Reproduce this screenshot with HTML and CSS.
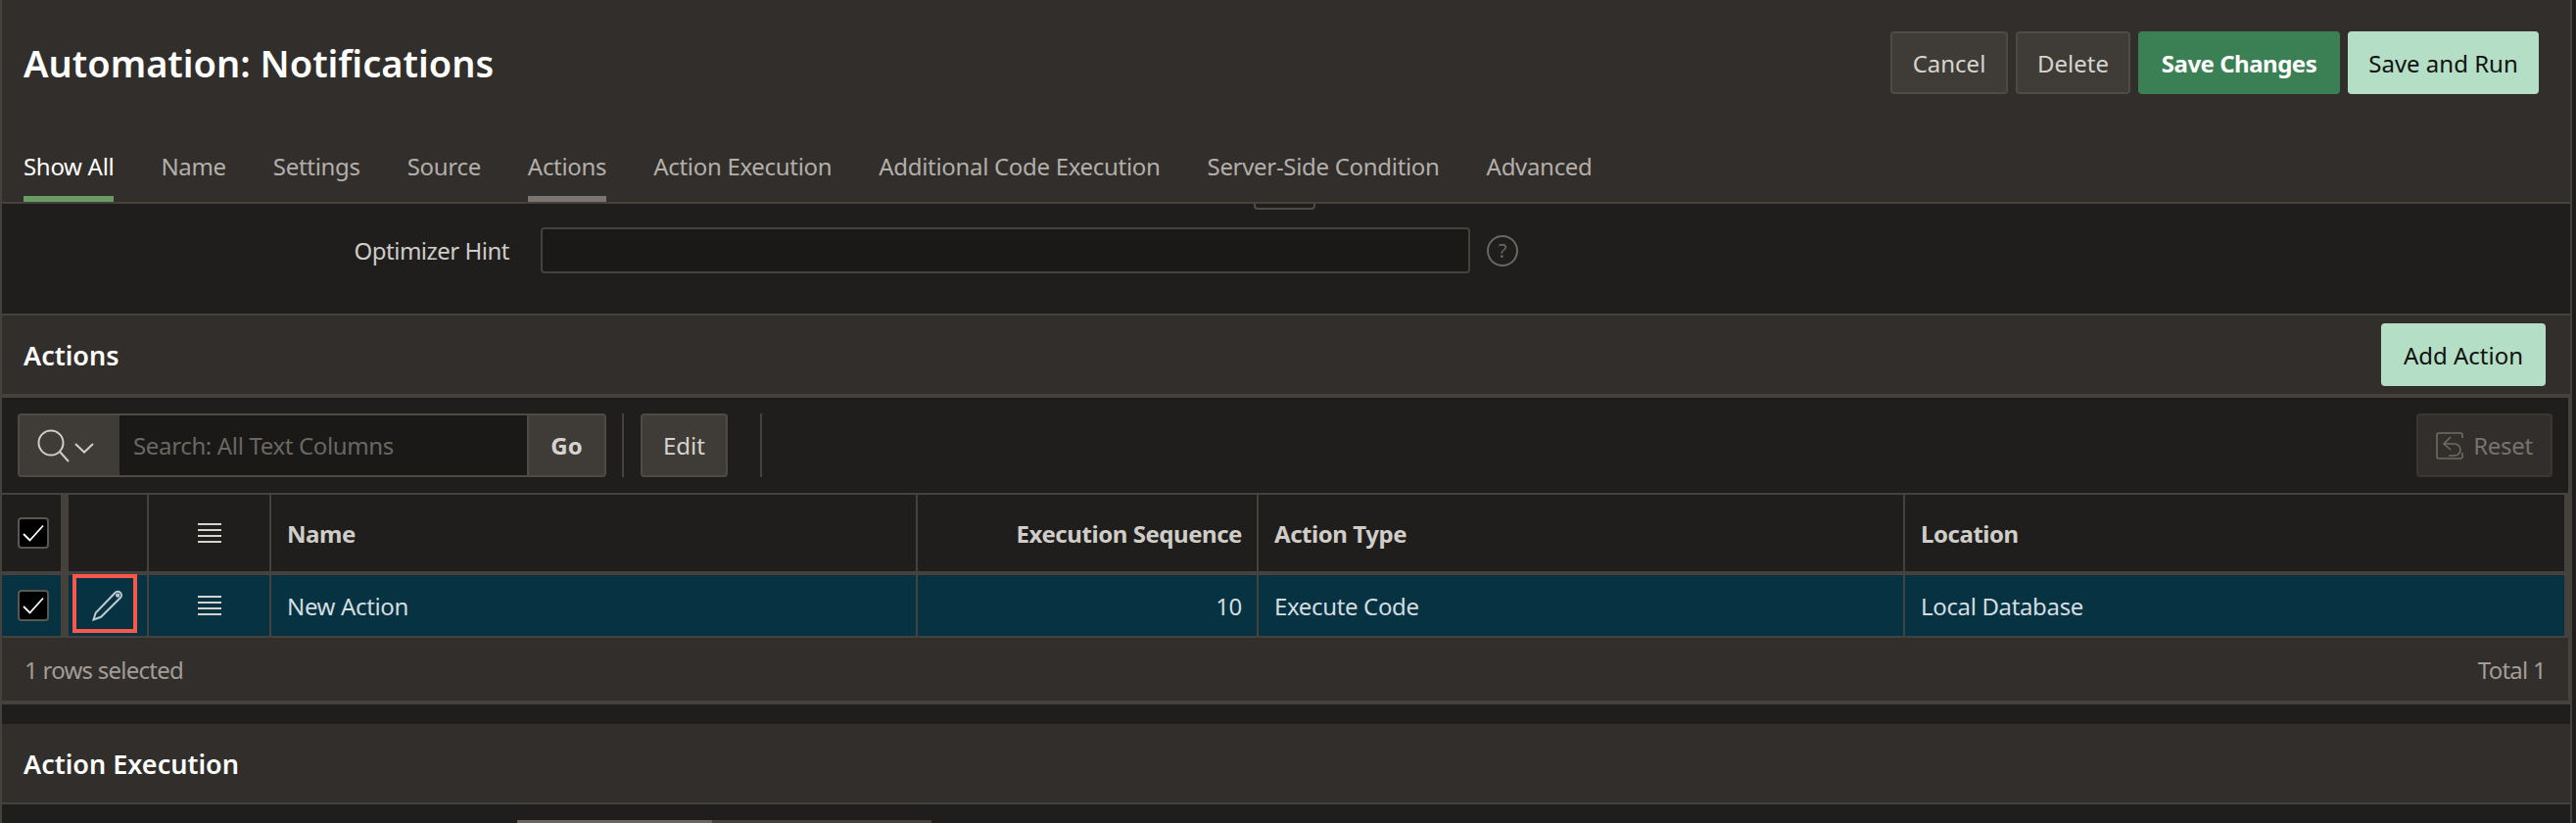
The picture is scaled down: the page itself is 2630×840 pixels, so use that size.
FILE: index.html
```html
<!DOCTYPE html>
<html lang="en">

<head>
    <meta charset="UTF-8">
    <title>Automation: Notifications</title>
    <link rel="stylesheet" href="styles.css">
</head>

<body>
    <div class="page">
        <header class="page-head">
            <div class="title-row">
                <h1>Automation: Notifications</h1>
                <div class="head-buttons">
                    <button class="btn btn-cancel">Cancel</button>
                    <button class="btn btn-delete">Delete</button>
                    <button class="btn btn-hot">Save Changes</button>
                    <button class="btn btn-light btn-run">Save and Run</button>
                </div>
            </div>
            <nav class="tabs">
                <a class="tab tab-current">Show All</a>
                <a class="tab">Name</a>
                <a class="tab">Settings</a>
                <a class="tab">Source</a>
                <a class="tab tab-active">Actions</a>
                <a class="tab">Action Execution</a>
                <a class="tab">Additional Code Execution</a>
                <a class="tab">Server-Side Condition</a>
                <a class="tab">Advanced</a>
            </nav>
        </header>

        <section class="hint-area">
            <div class="cut-button"></div>
            <div class="hint-row">
                <label class="hint-label">Optimizer Hint</label>
                <div class="hint-input"></div>
                <span class="help-icon">?</span>
            </div>
        </section>

        <section class="region-head">
            <h2>Actions</h2>
            <button class="btn btn-light btn-add">Add Action</button>
        </section>

        <div class="report">
            <div class="toolbar">
                <div class="search">
                    <div class="search-icon">
                        <svg width="70" height="44" viewBox="0 0 70 44" fill="none" stroke="#cfccc8" stroke-width="2">
                            <circle cx="16" cy="19" r="12.5" />
                            <path d="M25 28l9 10" />
                            <path d="M41 20l9 8.5 9-8.5" />
                        </svg>
                    </div>
                    <div class="search-input">Search: All Text Columns</div>
                    <div class="search-go">Go</div>
                </div>
                <span class="tool-sep"></span>
                <button class="btn-edit">Edit</button>
                <span class="tool-sep"></span>
                <button class="btn-reset">
                    <svg width="28" height="28" viewBox="0 0 28 28" fill="none" stroke="#6f6b67" stroke-width="1.6">
                        <path d="M27 6V3a2 2 0 0 0-2-2H3a2 2 0 0 0-2 2v22a2 2 0 0 0 2 2h22a2 2 0 0 0 2-2v-4" />
                        <path d="M15 5l-7 7 7 6M8 12h11a6 6 0 0 1 0 12h-6" />
                    </svg>
                    Reset
                </button>
            </div>

            <div class="grid">
                <div class="grid-row grid-head">
                    <div class="cell cell-check"><span class="check"><svg width="22" height="18" viewBox="0 0 22 18" fill="none" stroke="#fff" stroke-width="1.8"><path d="M1 10l6.5 6.5L21 1.5" /></svg></span></div>
                    <div class="cell cell-edit"></div>
                    <div class="cell cell-menu"><span class="lines"></span></div>
                    <div class="cell cell-name">Name</div>
                    <div class="cell cell-seq">Execution Sequence</div>
                    <div class="cell cell-type">Action Type</div>
                    <div class="cell cell-loc">Location</div>
                </div>
                <div class="grid-row grid-selected">
                    <div class="cell cell-check"><span class="check"><svg width="22" height="18" viewBox="0 0 22 18" fill="none" stroke="#fff" stroke-width="1.8"><path d="M1 10l6.5 6.5L21 1.5" /></svg></span></div>
                    <div class="cell cell-edit">
                        <span class="edit-mark">
                            <svg class="pencil" width="32" height="32" viewBox="0 0 32 32" fill="none" stroke="#bccbd0" stroke-width="2">
                                <path d="M1.5 30.5l2.2-7L23.5 3a3.6 3.6 0 0 1 5.5 5L9 27.8z" />
                                <circle cx="26.2" cy="5.6" r="1.2" />
                            </svg>
                        </span>
                    </div>
                    <div class="cell cell-menu"><span class="lines"></span></div>
                    <div class="cell cell-name">New Action</div>
                    <div class="cell cell-seq">10</div>
                    <div class="cell cell-type">Execute Code</div>
                    <div class="cell cell-loc">Local Database</div>
                </div>
            </div>

            <footer class="grid-foot">
                <span>1 rows selected</span>
                <span>Total 1</span>
            </footer>
        </div>

        <div class="gap"></div>

        <section class="region-head region-exec">
            <h2>Action Execution</h2>
        </section>

        <div class="next-field"><span class="next-fill"></span></div>
    </div>
</body>

</html>
```

FILE: styles.css
```css
* {
    box-sizing: border-box;
}

html,
body {
    margin: 0;
    padding: 0;
    height: 840px;
    overflow: hidden;
    background-color: #1f1e1c;
}

body {
    font-family: "Noto Sans", "Open Sans", sans-serif;
    font-size: 24px;
    letter-spacing: -0.35px;
    color: #d6d3cf;
}

.page {
    width: 2626px;
    height: 840px;
    border-left: 2px solid #45423e;
    border-right: 2px solid #45423e;
    background-color: #1f1e1c;
}

button {
    font-family: inherit;
}

/* page header */
.page-head {
    height: 208px;
    background-color: #322e2b;
    border-bottom: 2px solid #45423e;
    display: flex;
    flex-direction: column;
    justify-content: space-between;
}

.title-row {
    display: flex;
    justify-content: space-between;
    padding: 32px 32px 0 22px;
}

h1 {
    margin: 0;
    font-size: 38px;
    font-weight: 600;
    line-height: 65px;
    letter-spacing: 0;
    color: #fff;
}

.head-buttons {
    display: flex;
    gap: 8px;
}

.btn {
    height: 64px;
    padding: 0;
    font-size: 24px;
    letter-spacing: 0;
    border-radius: 4px;
    border: 2px solid #4e4b47;
    background-color: #3f3c38;
    color: #d6d3cf;
}

.btn-cancel {
    width: 120px;
}

.btn-delete {
    width: 117px;
}

.btn-hot {
    width: 206px;
    border: none;
    background-color: #3b8055;
    color: #fff;
    font-weight: 700;
    letter-spacing: -0.5px;
}

.btn-light {
    border: none;
    background-color: #b4dec6;
    color: #12110f;
}

.btn-run {
    width: 195px;
}

.btn-add {
    width: 168px;
}

.tabs {
    display: flex;
    gap: 48px;
    padding-left: 22px;
}

.tab {
    height: 62px;
    line-height: 52px;
    font-size: 24px;
    letter-spacing: -0.31px;
    color: #b3afaa;
    border-bottom: 6px solid transparent;
}

.tab-current {
    color: #fff;
    border-bottom-color: #6a9a66;
}

.tab-active {
    border-bottom-color: #7b756f;
}

/* hint field */
.hint-area {
    height: 114px;
    border-bottom: 2px solid #45423e;
}

.cut-button {
    width: 63px;
    height: 6px;
    margin-left: 1278px;
    border: 2px solid #4e4b47;
    border-top: none;
    border-radius: 0 0 4px 4px;
}

.hint-row {
    display: flex;
    align-items: center;
    margin-top: 18px;
}

.hint-label {
    width: 518px;
    text-align: right;
    letter-spacing: -0.5px;
    color: #cfccc8;
}

.hint-input {
    width: 949px;
    height: 47px;
    margin-left: 32px;
    background-color: #1a1917;
    border: 2px solid #45423e;
    border-radius: 4px;
}

.help-icon {
    width: 32px;
    height: 32px;
    margin-left: 17px;
    border: 2px solid #6a6763;
    border-radius: 50%;
    color: #6a6763;
    font-size: 20px;
    line-height: 28px;
    text-align: center;
}

/* region headers */
.region-head {
    height: 84px;
    display: flex;
    justify-content: space-between;
    align-items: center;
    padding: 0 25px 0 22px;
    background-color: #322e2b;
    border-bottom: 4px solid #45423e;
}

h2 {
    margin: 0;
    font-size: 27px;
    font-weight: 600;
    letter-spacing: 0;
    color: #fff;
}

/* report block, the lighter strip on the right comes from its background */
.report {
    background-color: #45423e;
}

.toolbar {
    width: 2620px;
    height: 99px;
    display: flex;
    align-items: center;
    padding: 0 16px;
    background-color: #1f1e1c;
    border-bottom: 2px solid #45423e;
}

.search {
    width: 601px;
    height: 65px;
    display: flex;
    border: 2px solid #4e4b47;
    border-radius: 4px;
}

.search-icon {
    width: 102px;
    background-color: #3f3c38;
    display: flex;
    align-items: center;
    justify-content: center;
}

.search-input {
    flex: 1;
    padding-left: 14px;
    line-height: 61px;
    background-color: #1a1917;
    color: #6a6763;
}

.search-go {
    width: 79px;
    border-left: 2px solid #4e4b47;
    background-color: #3f3c38;
    font-weight: 700;
    letter-spacing: 0;
    line-height: 61px;
    text-align: center;
}

.tool-sep {
    width: 2px;
    height: 65px;
    margin: 0 17px 0 16px;
    background-color: #45423e;
}

.btn-edit {
    width: 89px;
    height: 65px;
    margin-right: 17px;
    padding: 0;
    font-size: 24px;
    color: #d6d3cf;
    background-color: #3f3c38;
    border: 2px solid #4e4b47;
    border-radius: 4px;
}

.btn-reset {
    width: 139px;
    height: 65px;
    margin-left: auto;
    padding: 0;
    display: flex;
    align-items: center;
    justify-content: center;
    gap: 10px;
    font-size: 24px;
    letter-spacing: -0.3px;
    color: #77736e;
    background-color: #322e2b;
    border: 2px solid #3a3733;
    border-radius: 4px;
}

/* grid */
.grid {
    width: 2616px;
    background-color: #1f1e1c;
}

.grid-row {
    display: flex;
}

.grid-head {
    height: 82px;
    border-bottom: 4px solid #45423e;
    font-weight: 700;
    letter-spacing: -0.45px;
    color: #d0cdc9;
}

.grid-selected {
    height: 64px;
    border-bottom: 2px solid #45423e;
    background-color: #063242;
    color: #d3dde0;
}

.cell {
    display: flex;
    align-items: center;
    padding: 0 16px;
    border-right: 2px solid #45423e;
}

.cell-check {
    width: 68px;
    padding: 0 0 0 4px;
    justify-content: center;
    border-right-width: 8px;
}

.cell-edit {
    width: 82px;
    padding: 0;
    justify-content: flex-start;
}

.cell-menu {
    width: 125px;
    padding: 0;
    justify-content: center;
}

.cell-name {
    width: 660px;
}

.cell-seq {
    width: 348px;
    padding-right: 15px;
    justify-content: flex-end;
}

.cell-type {
    width: 660px;
}

.cell-loc {
    flex: 1;
    border-right: none;
}

.check {
    width: 32px;
    height: 32px;
    display: flex;
    align-items: center;
    justify-content: center;
    background-color: #000;
    border: 2px solid #5a5651;
    border-radius: 4px;
}

.lines {
    width: 24px;
    height: 20px;
    background: repeating-linear-gradient(to bottom, #d6d3cf 0, #d6d3cf 2px, transparent 2px, transparent 6px);
}

.edit-mark {
    width: 66px;
    height: 60px;
    margin: -1px 0 0 4px;
    align-self: flex-start;
    display: flex;
    align-items: center;
    justify-content: center;
    border: 4px solid #f9574c;
}

.pencil {
    margin: 4px 0 0 6px;
}

.grid-foot {
    width: 2620px;
    height: 68px;
    display: flex;
    justify-content: space-between;
    align-items: center;
    padding: 0 23px 0 23px;
    background-color: #322e2b;
    border-bottom: 4px solid #45423e;
    letter-spacing: -0.75px;
    color: #a19d98;
}

.gap {
    height: 20px;
}

.region-exec {
    height: 82px;
    border-bottom-width: 2px;
}

.next-field {
    width: 423px;
    height: 3px;
    margin: 16px 0 0 526px;
    background-color: #45423e;
}

.next-fill {
    display: block;
    width: 199px;
    height: 3px;
    background-color: #6a6661;
}
```
